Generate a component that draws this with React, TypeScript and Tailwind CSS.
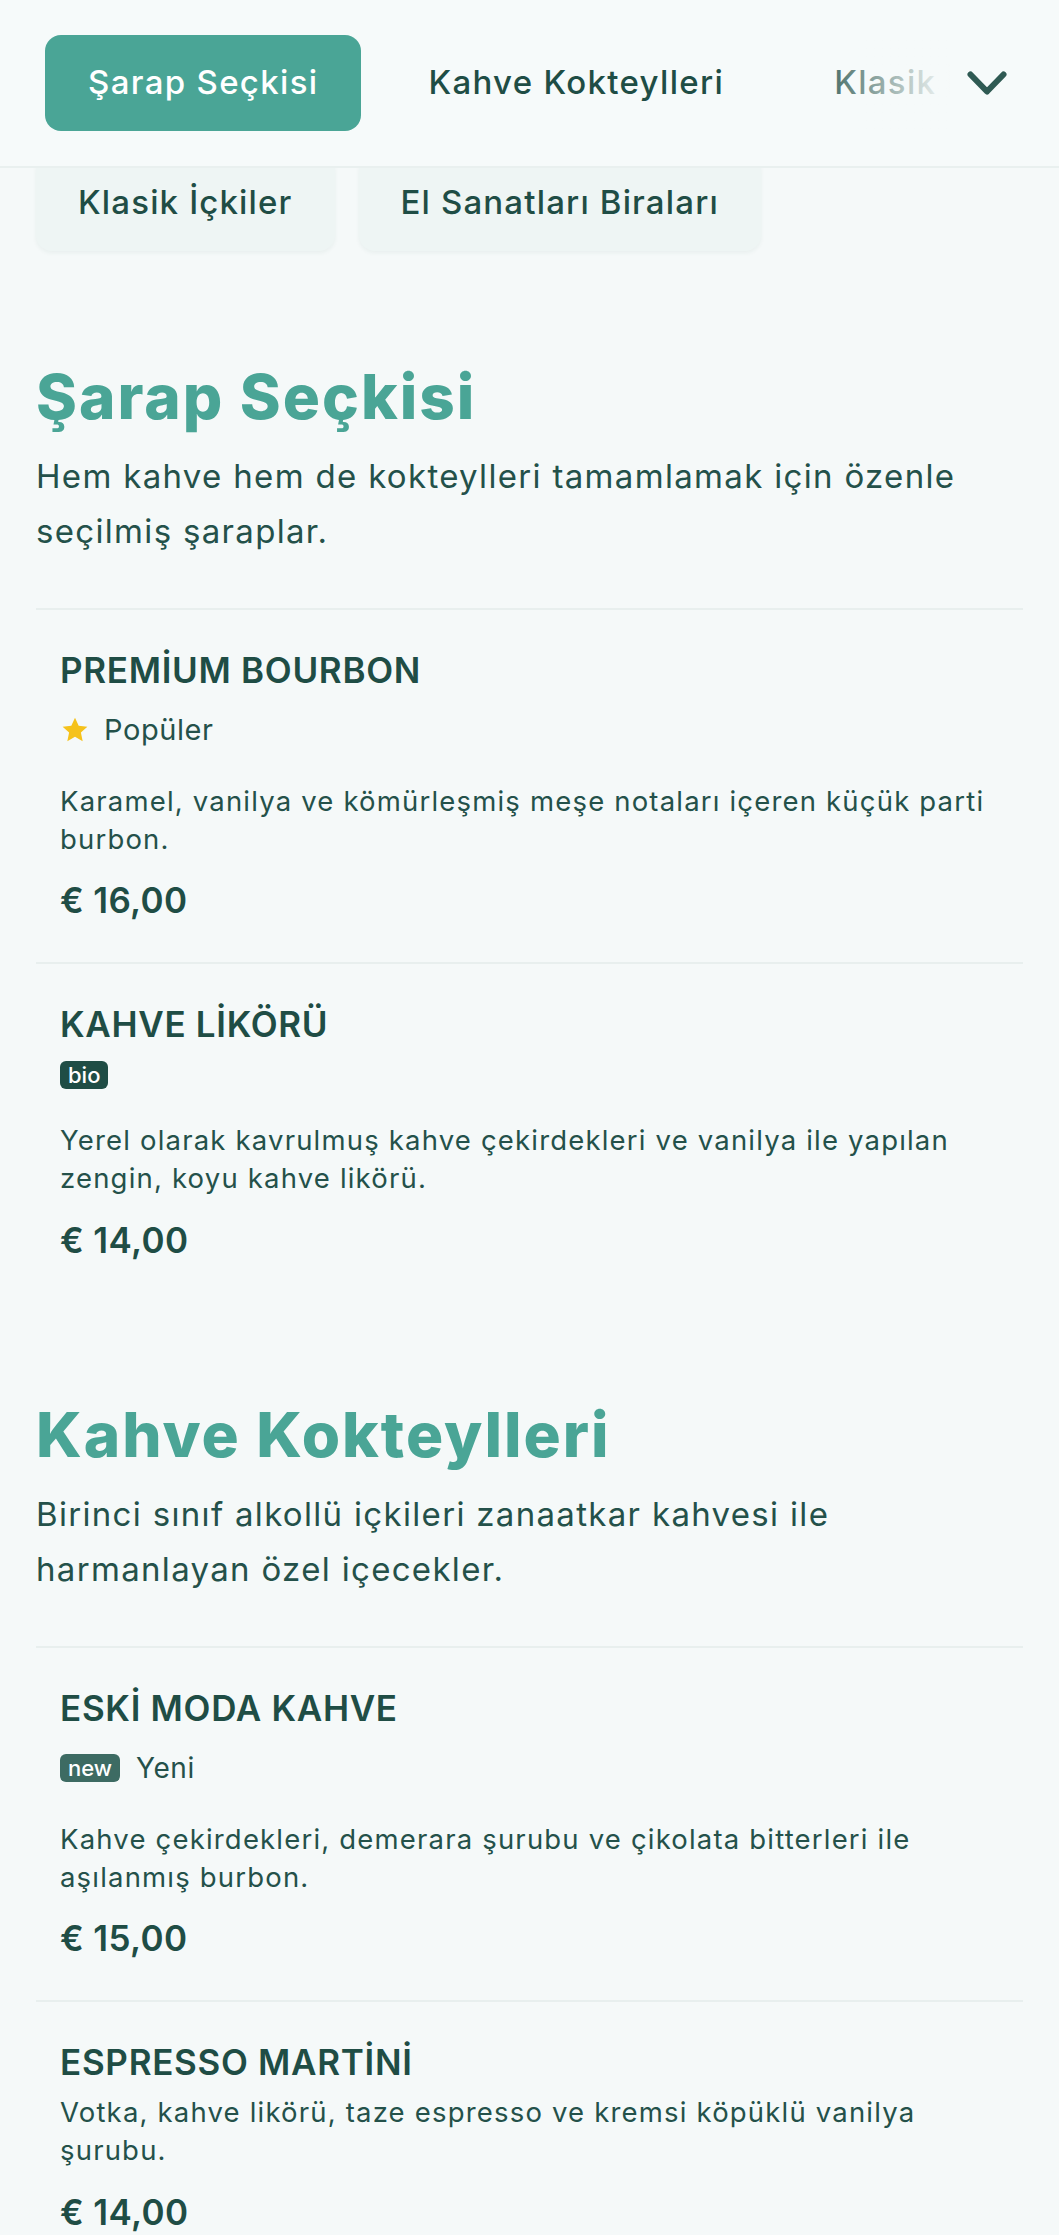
import React from "react";

const FONT: React.CSSProperties = {
  fontFamily: "Inter, 'Noto Sans', sans-serif",
};

type Tag =
  | { kind: "popular"; label: string }
  | { kind: "badge"; badge: string; label?: string };

type Item = {
  name: string;
  tag?: Tag;
  desc: string;
  price: string;
};

type Section = {
  title: string;
  desc: string;
  items: Item[];
};

const sections: Section[] = [
  {
    title: "Şarap Seçkisi",
    desc: "Hem kahve hem de kokteylleri tamamlamak için özenle seçilmiş şaraplar.",
    items: [
      {
        name: "PREMİUM BOURBON",
        tag: { kind: "popular", label: "Popüler" },
        desc: "Karamel, vanilya ve kömürleşmiş meşe notaları içeren küçük parti burbon.",
        price: "€ 16,00",
      },
      {
        name: "KAHVE LİKÖRÜ",
        tag: { kind: "badge", badge: "bio" },
        desc: "Yerel olarak kavrulmuş kahve çekirdekleri ve vanilya ile yapılan zengin, koyu kahve likörü.",
        price: "€ 14,00",
      },
    ],
  },
  {
    title: "Kahve Kokteylleri",
    desc: "Birinci sınıf alkollü içkileri zanaatkar kahvesi ile harmanlayan özel içecekler.",
    items: [
      {
        name: "ESKİ MODA KAHVE",
        tag: { kind: "badge", badge: "new", label: "Yeni" },
        desc: "Kahve çekirdekleri, demerara şurubu ve çikolata bitterleri ile aşılanmış burbon.",
        price: "€ 15,00",
      },
      {
        name: "ESPRESSO MARTİNİ",
        desc: "Votka, kahve likörü, taze espresso ve kremsi köpüklü vanilya şurubu.",
        price: "€ 14,00",
      },
    ],
  },
];

function Star() {
  return (
    <svg width="30" height="30" viewBox="0 0 24 24" className="shrink-0">
      <path
        d="M12 2.2l2.95 6.35 6.95.78-5.18 4.72 1.42 6.85L12 17.4l-6.14 3.5 1.42-6.85L2.1 9.33l6.95-.78z"
        fill="#f5c21b"
      />
    </svg>
  );
}

function TagRow({ tag }: { tag: Tag }) {
  if (tag.kind === "popular") {
    return (
      <div className="mt-[14px] flex h-[44px] items-center gap-[14px]">
        <Star />
        <span className="text-[29px] leading-[40px] tracking-[0.02em] text-[#24514a]">{tag.label}</span>
      </div>
    );
  }
  if (!tag.label) {
    return (
      <div className="mt-[13px] flex">
        <span className="flex h-[28px] items-center rounded-[6px] bg-[#1f4d45] px-[8px] text-[22px] font-medium leading-none text-white">
          {tag.badge}
        </span>
      </div>
    );
  }
  return (
    <div className="mt-[14px] flex h-[44px] items-center gap-[16px]">
      <span className="flex h-[28px] items-center rounded-[6px] bg-[#3d6b63] px-[8px] text-[22px] font-medium leading-none text-white">
        {tag.badge}
      </span>
      <span className="text-[28px] leading-[40px] tracking-[0.02em] text-[#24514a]">{tag.label}</span>
    </div>
  );
}

function MenuItem({ item }: { item: Item }) {
  const descMt = !item.tag
    ? "mt-[8px]"
    : item.tag.kind === "badge" && !item.tag.label
      ? "mt-[33px]"
      : "mt-[31px]";
  return (
    <div className="border-t-2 border-[#e8efee] px-[24px] pt-[36px] pb-[38px]">
      <h3 className="text-[35px] font-semibold leading-[48px] tracking-[0.02em] text-[#1f4d45]">
        {item.name}
      </h3>
      {item.tag && <TagRow tag={item.tag} />}
      <p className={descMt + " text-[27.5px] leading-[37.7px] tracking-[0.043em] text-[#24514a]"}>
        {item.desc}
      </p>
      <div className="mt-[18px] text-[35px] font-semibold leading-[48px] tracking-[0.01em] text-[#1f4d45]">
        {item.price}
      </div>
    </div>
  );
}

function SectionBlock({ section, first }: { section: Section; first: boolean }) {
  return (
    <section className={first ? "mt-[109px]" : "mt-[96px]"}>
      <h2 className="text-[62px] font-extrabold leading-[74px] tracking-[2px] text-[#4aa596]">
        {section.title}
      </h2>
      <p className="mt-[15px] max-w-[960px] text-[33px] leading-[55px] tracking-[0.04em] text-[#24514a]">
        {section.desc}
      </p>
      <div className="mt-[49px]">
        {section.items.map((it) => (
          <MenuItem key={it.name} item={it} />
        ))}
      </div>
    </section>
  );
}

export default function App() {
  const navMain = ["Şarap Seçkisi", "Kahve Kokteylleri", "Klasik İçkiler"];
  const navMore = ["Klasik İçkiler", "El Sanatları Biraları"];
  return (
    <div className="min-h-[2235px] bg-[#f5f9f9]" style={FONT}>
      <header className="relative z-10 flex h-[168px] items-center border-b-2 border-[#e9f0ef] bg-[#f6fafa] pl-[45px] pr-[52px]">
        <div className="relative flex flex-1 gap-[24px] overflow-hidden">
          {navMain.map((n, i) => (
            <button
              key={n}
              className={
                i === 0
                  ? "flex h-[96px] shrink-0 items-center rounded-[16px] bg-[#4aa596] px-[43px] text-[33px] font-medium tracking-[0.04em] text-white"
                  : "flex h-[96px] shrink-0 items-center rounded-[16px] px-[43px] text-[33px] font-medium tracking-[0.04em] text-[#1f4d45]"
              }
            >
              {n}
            </button>
          ))}
          <div className="pointer-events-none absolute top-0 right-0 h-full w-[150px] bg-gradient-to-r from-[#f6fafa]/0 to-[#f6fafa]" />
        </div>
        <svg width="40" height="24" viewBox="0 0 40 24" className="ml-[17px] shrink-0">
          <polyline
            points="3.5,3.5 20,20.5 36.5,3.5"
            fill="none"
            stroke="#2f5a53"
            strokeWidth="6"
            strokeLinecap="round"
            strokeLinejoin="round"
          />
        </svg>
      </header>

      <div className="-mt-[13px] flex gap-[24px] px-[36px]">
        {navMore.map((n) => (
          <button
            key={n}
            className="flex h-[96px] shrink-0 items-center rounded-[16px] bg-[#eef5f4] px-[42px] text-[33px] font-medium tracking-[0.035em] text-[#1f4d45] shadow-[0_2px_4px_rgba(31,77,69,0.06)]"
          >
            {n}
          </button>
        ))}
      </div>

      <main className="px-[36px]">
        {sections.map((s, i) => (
          <SectionBlock key={s.title} section={s} first={i === 0} />
        ))}
      </main>
    </div>
  );
}
